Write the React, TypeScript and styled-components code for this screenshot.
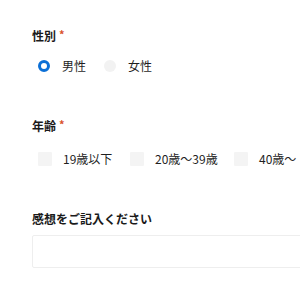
import React from "react";
import styled, { createGlobalStyle } from "styled-components";

const GlobalStyle = createGlobalStyle`
  html, body {
    margin: 0;
    padding: 0;
    background: #fff;
  }
  body {
    font-family: "Noto Sans CJK JP", "Noto Sans", sans-serif;
    color: #222;
    overflow: hidden;
  }
`;

const ageOptions = [
  { label: "19歳以下", width: 92 },
  { label: "20歳〜39歳", width: 104 },
  { label: "40歳〜", width: 0 },
];

function App() {
  return (
    <>
      <GlobalStyle />
      <Form>
        <Section>
          <Label>
            性別<Required>*</Required>
          </Label>
          <Options>
            <Option width={66}>
              <Radio checked />
              <span>男性</span>
            </Option>
            <Option width={0}>
              <Radio />
              <span>女性</span>
            </Option>
          </Options>
        </Section>

        <Section>
          <Label>
            年齢<Required>*</Required>
          </Label>
          <Options checkbox>
            {ageOptions.map((a) => (
              <Option key={a.label} width={a.width}>
                <Checkbox />
                <span>{a.label}</span>
              </Option>
            ))}
          </Options>
        </Section>

        <Section>
          <Label>感想をご記入ください</Label>
          <TextBox />
        </Section>
      </Form>
    </>
  );
}

export default App;

const Form = styled.div`
  width: 400px;
  padding: 27px 0 0 32px;
  display: flex;
  flex-direction: column;
  gap: 42px;
`;

const Section = styled.div`
  display: flex;
  flex-direction: column;
`;

const Label = styled.div`
  font-size: 12px;
  font-weight: 700;
  line-height: 18px;
  color: #1a1a1a;
  display: flex;
  align-items: flex-start;
`;

const Required = styled.span`
  color: #d9522b;
  font-size: 11px;
  margin-left: 3px;
  line-height: 14px;
`;

const Options = styled.div<{ checkbox?: boolean }>`
  display: flex;
  align-items: center;
  margin-top: ${(p) => (p.checkbox ? "15px" : "12px")};
  padding-left: 6px;
  font-size: 12px;
  line-height: 18px;
  color: #1f1f1f;
  white-space: nowrap;
`;

const Option = styled.label<{ width: number }>`
  display: flex;
  align-items: center;
  gap: 11px;
  flex-shrink: 0;
  width: ${(p) => (p.width ? `${p.width}px` : "auto")};
`;

const Radio = styled.span<{ checked?: boolean }>`
  box-sizing: border-box;
  width: 12px;
  height: 12px;
  border-radius: 50%;
  flex-shrink: 0;
  background: ${(p) => (p.checked ? "#fff" : "#f2f2f2")};
  border: ${(p) => (p.checked ? "3.5px solid #0b6fd6" : "none")};
  margin-right: 1px;
`;

const Checkbox = styled.span`
  width: 14px;
  height: 14px;
  flex-shrink: 0;
  background: #f4f4f4;
  border-radius: 1px;
`;

const TextBox = styled.div`
  margin-top: 7px;
  height: 31px;
  width: 300px;
  border: 1px solid #eeeeee;
  border-radius: 2px;
  background: #fff;
`;
